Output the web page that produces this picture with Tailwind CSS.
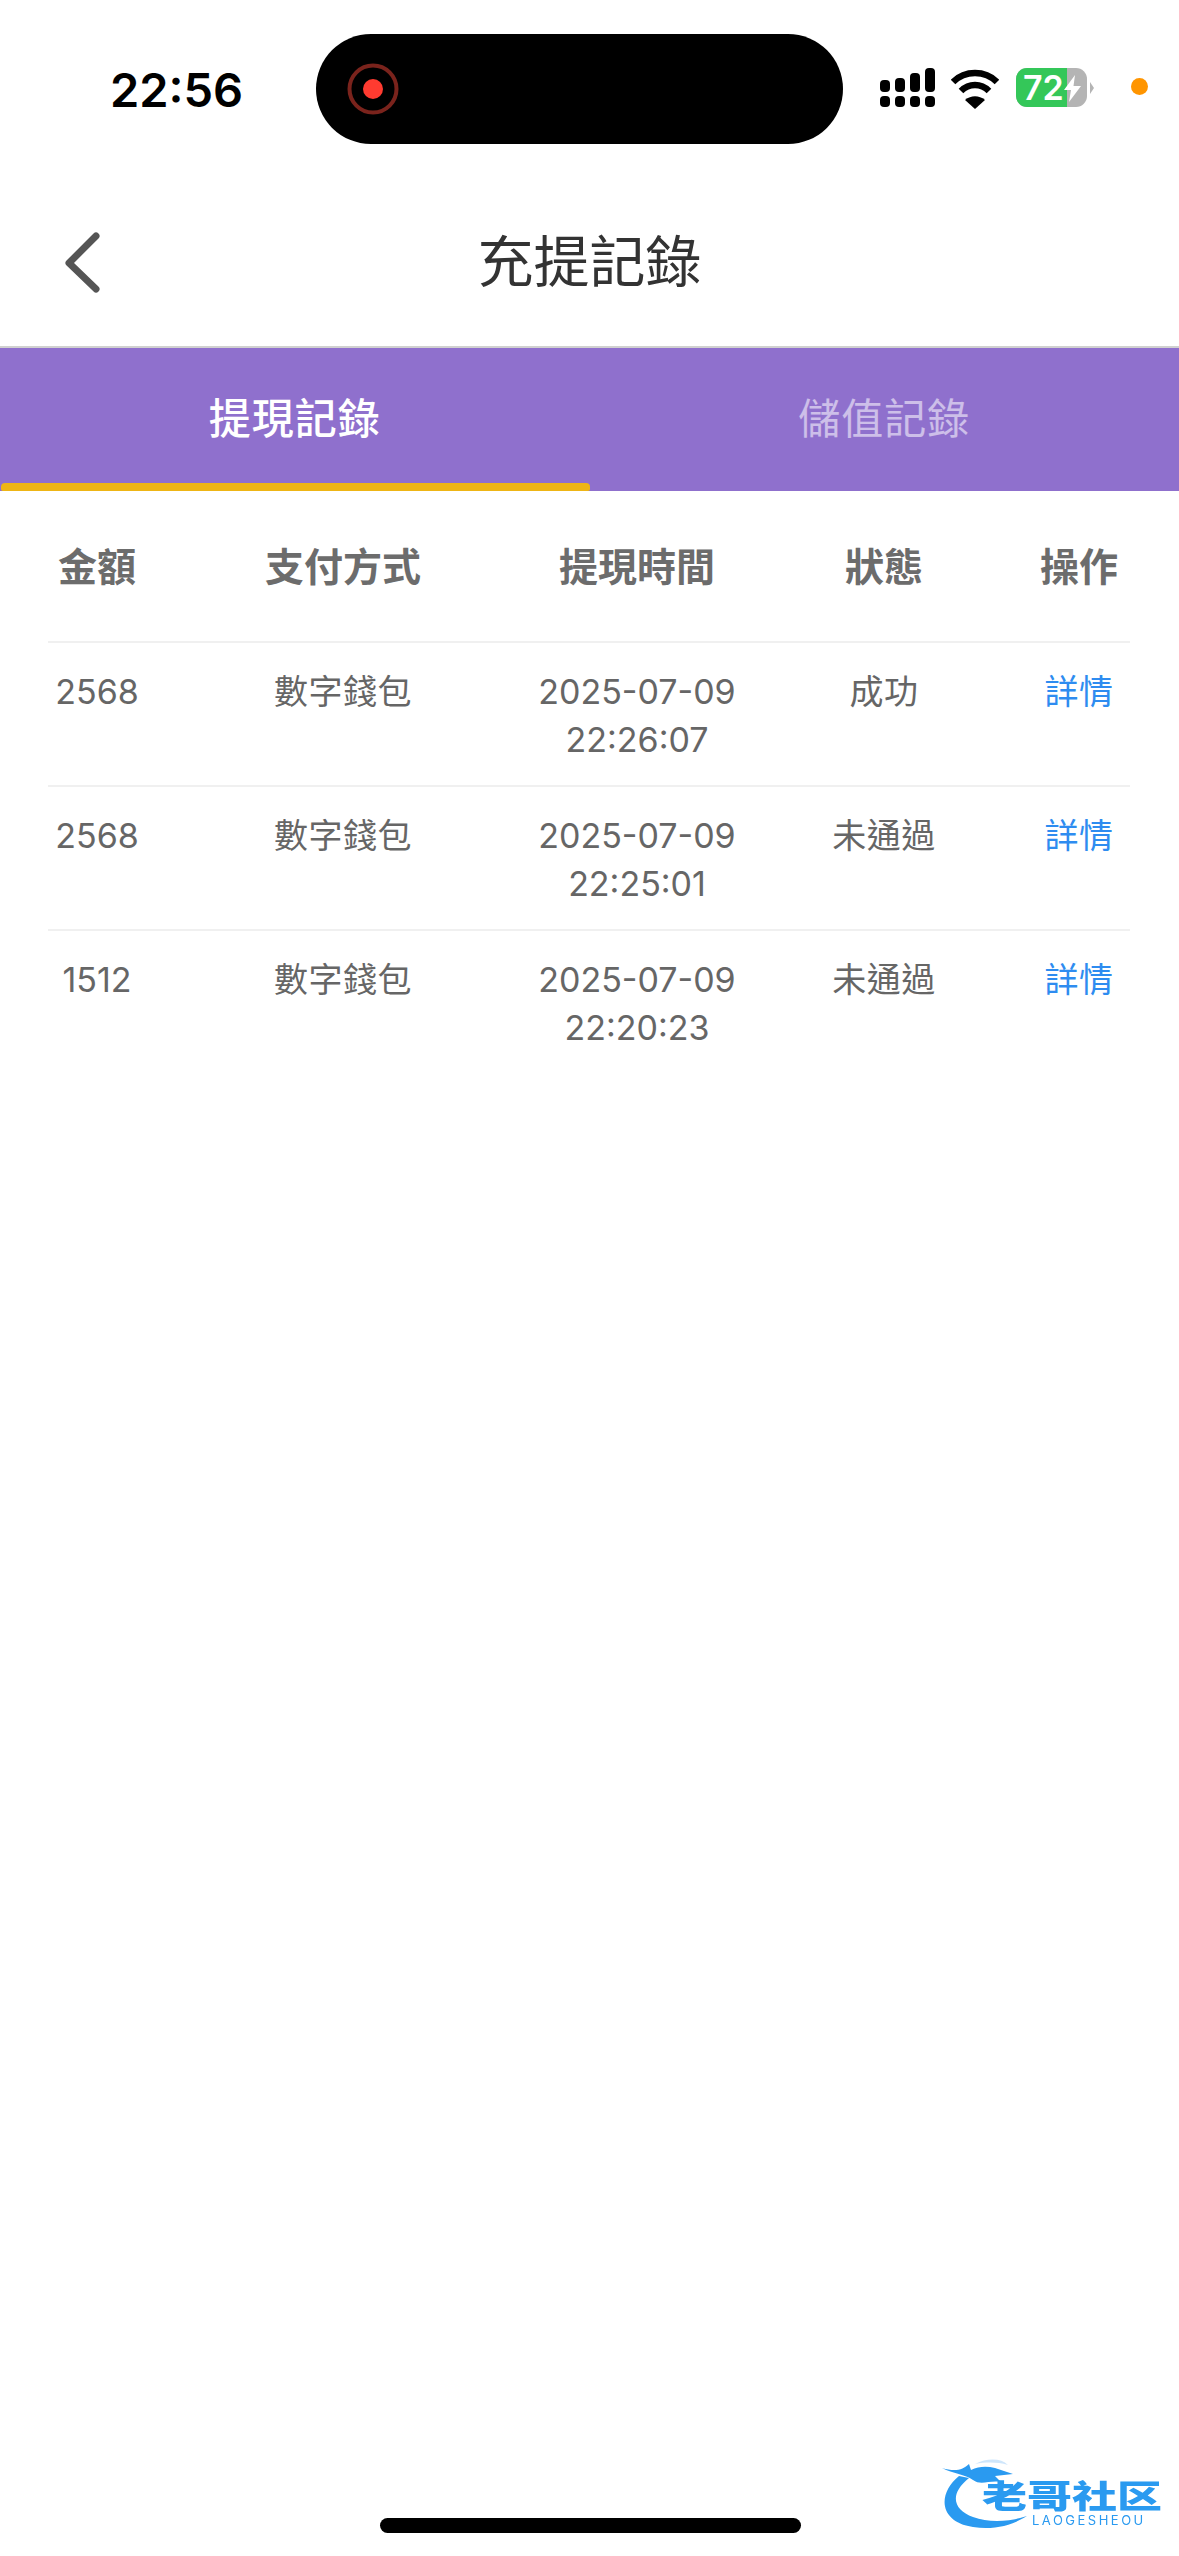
<!doctype html>
<html lang="zh-Hant">
<head>
<meta charset="utf-8">
<script src="https://cdn.jsdelivr.net/npm/@tailwindcss/browser@4"></script>
</head>
<body class="bg-white">
<div class="relative w-[1179px] h-[2556px] overflow-hidden bg-white font-['Inter','Noto_Sans_CJK_TC',sans-serif]">

  <!-- status bar -->
  <div class="flex items-start h-[144px] pt-[34px]">
    <div class="w-[316px] h-[110px] flex items-center pl-[110px] text-[47px] font-semibold text-black leading-none">22:56</div>
    <div class="w-[527px] h-[110px] rounded-[55px] bg-black flex items-center pl-[31px]">
      <svg width="52" height="52" viewBox="0 0 52 52">
        <circle cx="26" cy="26" r="23.5" fill="none" stroke="#7a231c" stroke-width="4"/>
        <circle cx="26" cy="26" r="10" fill="#ff3b30"/>
      </svg>
    </div>
    <svg class="ml-[37px]" width="56" height="110" viewBox="0 0 56 110">
      <g fill="#000">
        <rect x="0" y="46" width="10" height="12" rx="4"/>
        <rect x="15" y="44" width="10" height="14" rx="4"/>
        <rect x="30" y="39" width="10" height="19" rx="4"/>
        <rect x="45" y="34" width="10" height="24" rx="4"/>
        <rect x="0" y="62" width="10" height="11" rx="4"/>
        <rect x="15" y="62" width="10" height="11" rx="4"/>
        <rect x="30" y="62" width="10" height="11" rx="4"/>
        <rect x="45" y="62" width="10" height="11" rx="4"/>
      </g>
    </svg>
    <svg class="ml-[15px]" width="48" height="110" viewBox="0 0 48 110">
      <g fill="none" stroke="#000" stroke-width="6.5">
        <path d="M2 48 C14 36 34 36 46 48"/>
        <path d="M10 57 C18 49 30 49 38 57"/>
      </g>
      <path d="M14 66 C20 61 28 61 34 66 L24 75 Z" fill="#000"/>
    </svg>
    <div class="ml-[17px] mt-[34px] flex items-center">
      <div class="relative w-[71px] h-[39px] rounded-[11px] overflow-hidden bg-[#b4b4b4] flex">
        <div class="w-[51px] h-full bg-[#34c759] flex items-center pl-[7px] text-[34px] leading-none font-semibold text-white">72</div>
        <svg class="absolute left-[48px] top-[7px]" width="17" height="27" viewBox="0 0 17 27">
          <path d="M11 0 L0 15 H7 L5 27 L17 11 H9.5 Z" fill="#fff"/>
        </svg>
      </div>
      <div class="ml-[3px] w-0 h-0 border-y-[6px] border-y-transparent border-l-[4px] border-l-[#b4b4b4]"></div>
    </div>
    <div class="ml-[37px] mt-[44px] w-[17px] h-[17px] rounded-full bg-[#ff9500]"></div>
  </div>

  <!-- nav bar -->
  <div class="relative h-[202px] flex items-center justify-center pt-[34px]">
    <svg class="absolute left-[62px] top-[86px]" width="42" height="64" viewBox="0 0 42 64">
      <path d="M34 6 L7 33 L34 59" fill="none" stroke="#555" stroke-width="7" stroke-linecap="round" stroke-linejoin="round"/>
    </svg>
    <div class="text-[56px] leading-none text-[#333] text-center">充提記錄</div>
  </div>

  <!-- tabs -->
  <div class="border-t-2 border-[#d0d0d0] bg-[#8f70cd] h-[145px] flex">
    <div class="relative w-1/2 flex items-center justify-center pb-[2px] text-[42px] font-medium leading-none text-white tracking-[1px]">
      提現記錄
      <div class="absolute left-[1px] right-0 bottom-0 h-[8px] rounded-t-[4px] rounded-b-[2px] bg-[#eeb515]"></div>
    </div>
    <div class="w-1/2 flex items-center justify-center pb-[2px] text-[42px] leading-none text-white/55 tracking-[1px]">儲值記錄</div>
  </div>

  <!-- table -->
  <div class="ml-[48px] w-[1082px] text-[#666]">
    <div class="h-[152px] grid grid-cols-[98px_254px_194px_160px_90px] gap-x-[70px] items-center text-center text-[39px] font-semibold leading-none text-[#6c6c6c] border-b-2 border-[#f0f0f0]">
      <div>金額</div><div>支付方式</div><div>提現時間</div><div>狀態</div><div>操作</div>
    </div>

    <div class="h-[144px] pt-[25px] grid grid-cols-[98px_254px_194px_160px_90px] gap-x-[70px] text-center text-[34px] leading-[48px] border-b-2 border-[#f0f0f0]">
      <div>2568</div><div class="tracking-[0.5px]">數字錢包</div>
      <div class="flex flex-col items-center whitespace-nowrap"><div>2025-07-09</div><div>22:26:07</div></div>
      <div class="tracking-[0.5px]">成功</div><div class="text-[#2e8cf0] tracking-[0.5px]">詳情</div>
    </div>
    <div class="h-[144px] pt-[25px] grid grid-cols-[98px_254px_194px_160px_90px] gap-x-[70px] text-center text-[34px] leading-[48px] border-b-2 border-[#f0f0f0]">
      <div>2568</div><div class="tracking-[0.5px]">數字錢包</div>
      <div class="flex flex-col items-center whitespace-nowrap"><div>2025-07-09</div><div>22:25:01</div></div>
      <div class="tracking-[0.5px]">未通過</div><div class="text-[#2e8cf0] tracking-[0.5px]">詳情</div>
    </div>
    <div class="h-[144px] pt-[25px] grid grid-cols-[98px_254px_194px_160px_90px] gap-x-[70px] text-center text-[34px] leading-[48px]">
      <div>1512</div><div class="tracking-[0.5px]">數字錢包</div>
      <div class="flex flex-col items-center whitespace-nowrap"><div>2025-07-09</div><div>22:20:23</div></div>
      <div class="tracking-[0.5px]">未通過</div><div class="text-[#2e8cf0] tracking-[0.5px]">詳情</div>
    </div>
  </div>

  <!-- watermark -->
  <div class="absolute left-[935px] top-[2450px] w-[240px] h-[90px] blur-[0.7px]">
    <svg class="absolute left-0 top-0" width="110" height="85" viewBox="0 0 110 85">
      <path d="M24 26 C2 44 4 72 38 77 C58 80 76 76 92 66 C74 72 54 73 38 67 C18 60 14 44 34 28 Z" fill="#2a9af0"/>
      <path d="M7 18 C20 22 28 20 34 14 L36 20 C44 16 52 16 60 18 L78 24 L60 26 L66 32 C54 30 46 36 38 30 C30 24 18 24 7 18 Z" fill="#2a9af0"/>
      <path d="M40 14 C52 8 66 8 73 15 C62 12 52 12 40 14 Z" fill="#cfe6fb"/>
    </svg>
    <div class="absolute left-[47px] top-[30px] whitespace-nowrap text-[45px] leading-[32px] font-black text-[#2a9af0] scale-y-[0.72]">老哥社区</div>
    <div class="absolute left-[97px] top-[63px] whitespace-nowrap text-[13px] leading-[14px] tracking-[2.5px] text-[#2a9af0]">LAOGESHEOU</div>
  </div>

  <!-- home indicator -->
  <div class="absolute left-[380px] top-[2518px] w-[421px] h-[15px] rounded-full bg-black"></div>
</div>
</body>
</html>
